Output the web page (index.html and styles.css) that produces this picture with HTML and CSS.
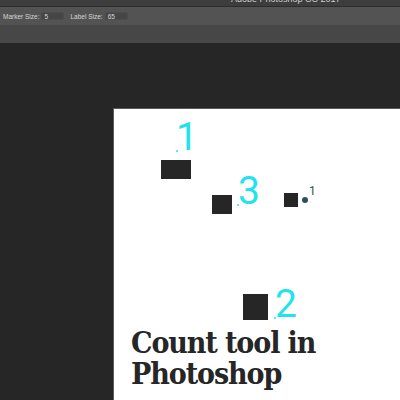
FILE: index.html
```html
<!DOCTYPE html>
<html>
<head>
<meta charset="utf-8">
<link rel="stylesheet" href="styles.css">
</head>
<body>
<div class="app">
  <div class="titlebar"><span class="title">Adobe Photoshop CC 2017</span></div>
  <div class="options">
    <span class="lbl">Marker Size:</span><span class="field f1">5</span>
    <span class="lbl lbl2">Label Size:</span><span class="field f2">65</span>
  </div>
  <div class="tabbar"></div>
  <div class="workspace">
    <div class="canvas">
      <div class="rect r1"></div>
      <div class="rect r3"></div>
      <div class="rect r4"></div>
      <div class="rect r2"></div>
      <div class="dot d1"></div>
      <div class="num n1">1</div>
      <div class="dot d3"></div>
      <div class="num n3">3</div>
      <div class="dot d2"></div>
      <div class="num n2">2</div>
      <div class="tdot"></div>
      <div class="tnum">1</div>
      <h1 class="heading"><span class="line">Count tool in</span><span class="line">Photoshop</span></h1>
    </div>
  </div>
</div>
</body>
</html>
```
FILE: styles.css
```css
html, body { margin: 0; padding: 0; }
body { width: 400px; height: 400px; overflow: hidden; background: #262626; font-family: "Liberation Sans", Arial, sans-serif; }
.app { display: flex; flex-direction: column; height: 400px; }
.titlebar { height: 6px; background: #3d3d3d; border-bottom: 1px solid #2c2c2c; overflow: hidden; position: relative; }
.title { position: absolute; left: 231px; top: -5px; font-size: 9px; line-height: 9px; color: #cfcfcf; white-space: nowrap; }
.options { height: 18px; background: #535353; display: flex; align-items: center; padding-left: 3px; }
.lbl { font-size: 6.5px; color: #d6d6d6; }
.lbl2 { margin-left: 6px; }
.field { height: 8px; line-height: 8px; background: #464646; border: 1px solid #4c4c4c; color: #d6d6d6; font-size: 6.5px; padding-left: 2px; box-sizing: border-box; margin-left: 2px; }
.f1 { width: 23px; }
.f2 { width: 23px; }
.tabbar { height: 18px; background: #474747; }
.workspace { flex: 1; background: #262626; padding-left: 113px; padding-top: 65px; }
.canvas { position: relative; height: 100%; background: #ffffff; border-top: 1px solid #5a5a5a; border-left: 1px solid #5a5a5a; box-sizing: border-box; padding: 0 0 0 17px; overflow: hidden; }
.rect { position: absolute; background: #262626; }
.r1 { left: 47px; top: 51px; width: 30px; height: 19px; }
.r3 { left: 98px; top: 86px; width: 20px; height: 19px; }
.r4 { left: 170px; top: 84px; width: 14px; height: 14px; }
.r2 { left: 129px; top: 185px; width: 25px; height: 26px; }
.dot { position: absolute; width: 2px; height: 2px; border-radius: 50%; background: #1fe3ef; }
.d1 { left: 62px; top: 41px; }
.d3 { left: 123px; top: 95px; }
.d2 { left: 160px; top: 208px; }
.num { position: absolute; font-family: Roboto, "Liberation Sans", sans-serif; font-weight: 400; font-size: 39px; line-height: 39px; color: #1fe3ef; }
.n1 { left: 62px; top: 9px; }
.n3 { left: 124px; top: 63px; }
.n2 { left: 161px; top: 176px; }
.tdot { position: absolute; left: 188px; top: 88px; width: 6px; height: 6px; border-radius: 50%; background: #2e5057; }
.tnum { position: absolute; left: 195px; top: 76px; font-family: Roboto, "Liberation Sans", sans-serif; font-size: 12px; line-height: 12px; color: #2e5057; }
.heading { margin: 0; padding-top: 222px; display: flex; flex-direction: column; font-family: "DejaVu Serif Condensed", "DejaVu Serif", serif; font-stretch: condensed; font-weight: bold; font-size: 30px; line-height: 24px; letter-spacing: -1.1px; color: #262626; }
.line { display: block; height: 24px; margin-bottom: 7px; }
```
